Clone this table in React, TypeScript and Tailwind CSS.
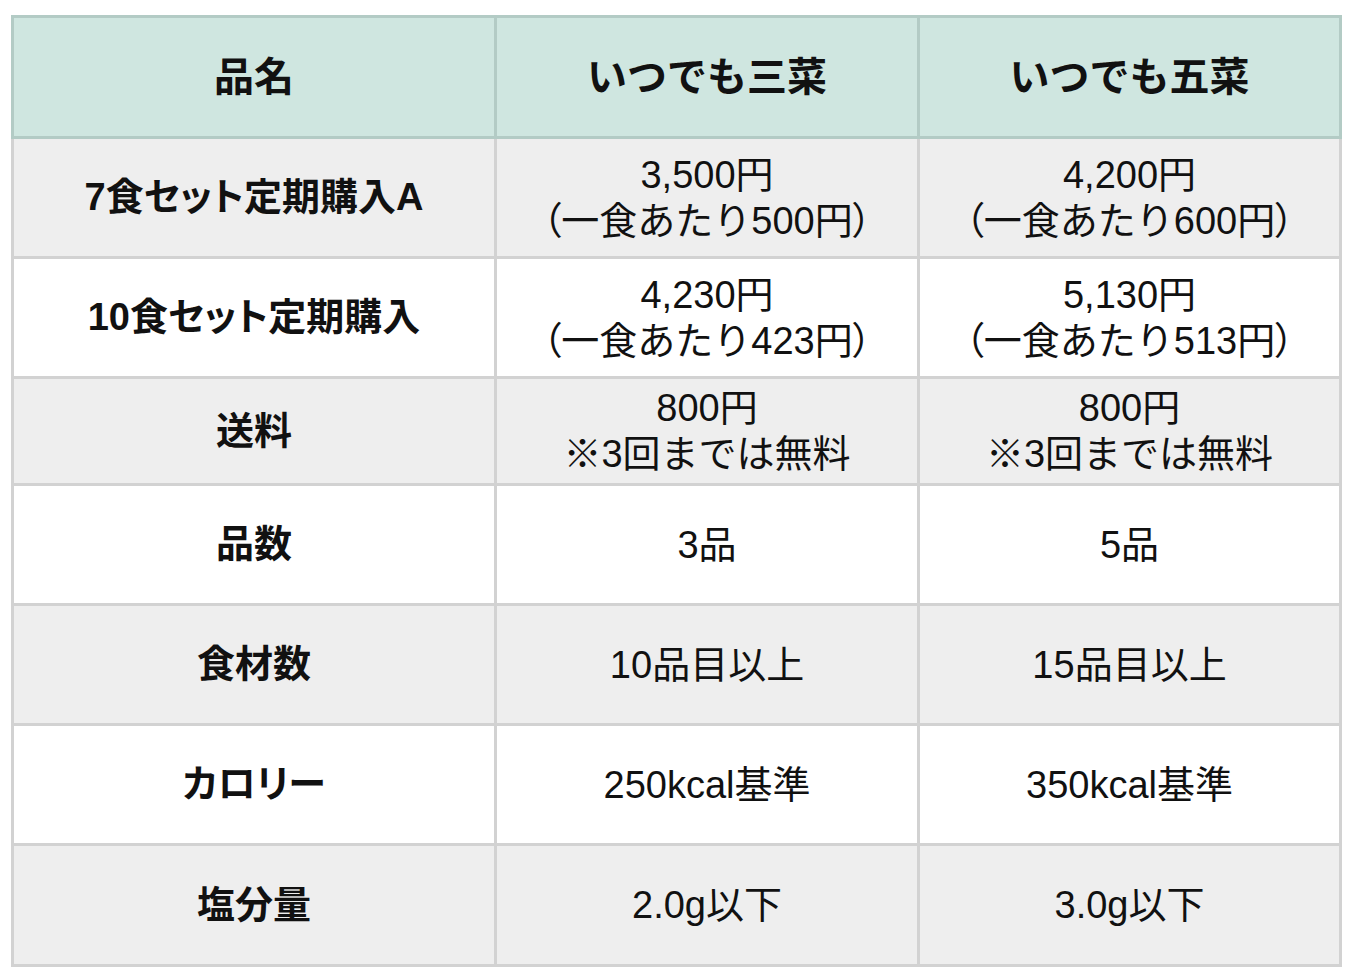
import React from 'react';

type Row = {
  label: string;
  sanSai: React.ReactNode;
  goSai: React.ReactNode;
  height: string;
  tone: 'gray' | 'white';
};

const Paren = ({ children }: { children: React.ReactNode }) => (
  <span className="[font-feature-settings:'palt']">{children}</span>
);

const perMeal = (price: string) => (
  <>
    <Paren>（</Paren>一食あたり{price}円<Paren>）</Paren>
  </>
);

const rows: Row[] = [
  {
    label: '7食セット定期購入A',
    sanSai: (
      <>
        <div>3,500円</div>
        <div>{perMeal('500')}</div>
      </>
    ),
    goSai: (
      <>
        <div>4,200円</div>
        <div>{perMeal('600')}</div>
      </>
    ),
    height: 'h-[120px]',
    tone: 'gray',
  },
  {
    label: '10食セット定期購入',
    sanSai: (
      <>
        <div>4,230円</div>
        <div>{perMeal('423')}</div>
      </>
    ),
    goSai: (
      <>
        <div>5,130円</div>
        <div>{perMeal('513')}</div>
      </>
    ),
    height: 'h-[120px]',
    tone: 'white',
  },
  {
    label: '送料',
    sanSai: (
      <>
        <div>800円</div>
        <div>※3回までは無料</div>
      </>
    ),
    goSai: (
      <>
        <div>800円</div>
        <div>※3回までは無料</div>
      </>
    ),
    height: 'h-[107px]',
    tone: 'gray',
  },
  { label: '品数', sanSai: '3品', goSai: '5品', height: 'h-[120px]', tone: 'white' },
  { label: '食材数', sanSai: '10品目以上', goSai: '15品目以上', height: 'h-[120px]', tone: 'gray' },
  { label: 'カロリー', sanSai: '250kcal基準', goSai: '350kcal基準', height: 'h-[120px]', tone: 'white' },
  { label: '塩分量', sanSai: '2.0g以下', goSai: '3.0g以下', height: 'h-[121px]', tone: 'gray' },
];

const App = () => {
  return (
    <div className="min-h-screen bg-white pt-[15px] pl-[11px] font-['Liberation_Sans','Noto_Sans_CJK_JP',sans-serif] text-[#111111]">
      <table className="border-collapse table-fixed">
        <colgroup>
          <col className="w-[483px]" />
          <col className="w-[423px]" />
          <col className="w-[422px]" />
        </colgroup>
        <thead>
          <tr className="h-[121px] bg-[#cfe6e0]">
            <th className="border-[3px] border-[#b3cbc5] text-[40px] font-bold">品名</th>
            <th className="border-[3px] border-[#b3cbc5] text-[40px] font-bold">いつでも三菜</th>
            <th className="border-[3px] border-[#b3cbc5] text-[40px] font-bold">いつでも五菜</th>
          </tr>
        </thead>
        <tbody>
          {rows.map((row) => (
            <tr
              key={row.label}
              className={`${row.height} ${row.tone === 'gray' ? 'bg-[#eeeeee]' : 'bg-white'}`}
            >
              <td className="border-[3px] border-[#d2d2d2] text-center text-[38px] font-bold [font-feature-settings:'palt']">
                {row.label}
              </td>
              <td className="border-[3px] border-[#d2d2d2] text-center text-[38px] leading-[46px]">
                {row.sanSai}
              </td>
              <td className="border-[3px] border-[#d2d2d2] text-center text-[38px] leading-[46px]">
                {row.goSai}
              </td>
            </tr>
          ))}
        </tbody>
      </table>
    </div>
  );
};

export default App;
